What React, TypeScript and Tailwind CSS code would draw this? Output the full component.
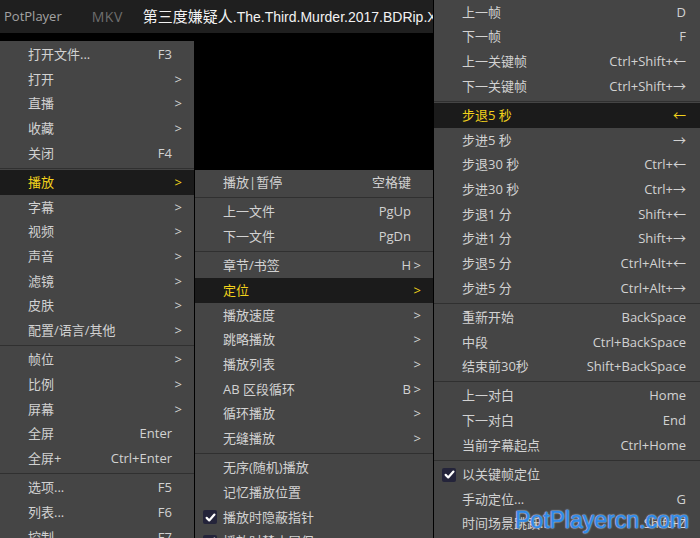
import React from 'react';

type Item = {
  label?: string;
  keys?: string;
  sub?: boolean;
  active?: boolean;
  checked?: boolean;
  sep?: boolean;
};

const mainMenu: Item[] = [
  { label: '打开文件...', keys: 'F3' },
  { label: '打开', sub: true },
  { label: '直播', sub: true },
  { label: '收藏', sub: true },
  { label: '关闭', keys: 'F4' },
  { sep: true },
  { label: '播放', sub: true, active: true },
  { label: '字幕', sub: true },
  { label: '视频', sub: true },
  { label: '声音', sub: true },
  { label: '滤镜', sub: true },
  { label: '皮肤', sub: true },
  { label: '配置/语言/其他', sub: true },
  { sep: true },
  { label: '帧位', sub: true },
  { label: '比例', sub: true },
  { label: '屏幕', sub: true },
  { label: '全屏', keys: 'Enter' },
  { label: '全屏+', keys: 'Ctrl+Enter' },
  { sep: true },
  { label: '选项...', keys: 'F5' },
  { label: '列表...', keys: 'F6' },
  { label: '控制', keys: 'F7' },
];

const playMenu: Item[] = [
  { label: '播放|暂停', keys: '空格键' },
  { sep: true },
  { label: '上一文件', keys: 'PgUp' },
  { label: '下一文件', keys: 'PgDn' },
  { sep: true },
  { label: '章节/书签', keys: 'H', sub: true },
  { label: '定位', sub: true, active: true },
  { label: '播放速度', sub: true },
  { label: '跳略播放', sub: true },
  { label: '播放列表', sub: true },
  { label: 'AB 区段循环', keys: 'B', sub: true },
  { label: '循环播放', sub: true },
  { label: '无缝播放', sub: true },
  { sep: true },
  { label: '无序(随机)播放' },
  { label: '记忆播放位置' },
  { label: '播放时隐蔽指针', checked: true },
  { label: '播放时禁止屏保', checked: true },
];

const seekMenu: Item[] = [
  { label: '上一帧', keys: 'D' },
  { label: '下一帧', keys: 'F' },
  { label: '上一关键帧', keys: 'Ctrl+Shift+←' },
  { label: '下一关键帧', keys: 'Ctrl+Shift+→' },
  { sep: true },
  { label: '步退5 秒', keys: '←', active: true },
  { label: '步进5 秒', keys: '→' },
  { label: '步退30 秒', keys: 'Ctrl+←' },
  { label: '步进30 秒', keys: 'Ctrl+→' },
  { label: '步退1 分', keys: 'Shift+←' },
  { label: '步进1 分', keys: 'Shift+→' },
  { label: '步退5 分', keys: 'Ctrl+Alt+←' },
  { label: '步进5 分', keys: 'Ctrl+Alt+→' },
  { sep: true },
  { label: '重新开始', keys: 'BackSpace' },
  { label: '中段', keys: 'Ctrl+BackSpace' },
  { label: '结束前30秒', keys: 'Shift+BackSpace' },
  { sep: true },
  { label: '上一对白', keys: 'Home' },
  { label: '下一对白', keys: 'End' },
  { label: '当前字幕起点', keys: 'Ctrl+Home' },
  { sep: true },
  { label: '以关键帧定位', checked: true },
  { label: '手动定位...', keys: 'G' },
  { label: '时间场景跳跃...', keys: 'Shift+Z' },
];

const CheckBox = () => (
  <span className="absolute left-[8px] top-1/2 -translate-y-1/2 w-[14px] h-[14px] rounded-[2px] bg-[#24243a] flex items-center justify-center">
    <svg width="11" height="11" viewBox="0 0 12 12">
      <path d="M1.8 6.4 L4.6 9.2 L10.3 2.8" fill="none" stroke="#ffffff" strokeWidth="2.4" strokeLinecap="round" strokeLinejoin="round" />
    </svg>
  </span>
);

const Menu = ({ items, arrows = true, className = '' }: { items: Item[]; arrows?: boolean; className?: string }) => (
  <div className={`bg-[#454545] text-[13px] text-[#d2d2d2] ${className}`}>
    {items.map((it, i) =>
      it.sep ? (
        <div key={i} className="h-[4.5px] flex items-center">
          <div className="w-full h-px bg-[#303030]" />
        </div>
      ) : (
        <div
          key={i}
          className={`relative h-[24.7px] shrink-0 flex items-center pl-[28px] ${arrows ? 'pr-[12px]' : 'pr-[14px]'} ${
            it.active ? 'bg-[#1b1b1b] text-[#f2d21b]' : ''
          }`}
        >
          {it.checked && <CheckBox />}
          <span className="flex-1 whitespace-nowrap">{it.label}</span>
          {it.keys && <span className="whitespace-nowrap">{it.keys}</span>}
          {arrows && <span className="w-[10px] text-right">{it.sub ? '>' : ''}</span>}
        </div>
      )
    )}
  </div>
);

export default function App() {
  return (
    <div
      className="relative w-[700px] h-[538px] overflow-hidden bg-black flex gap-px"
      style={{ fontFamily: '"Open Sans", "Noto Sans CJK SC", sans-serif' }}
    >
      <div className="w-[433px] shrink-0 flex flex-col">
        <div className="h-[33px] shrink-0 bg-[#1f1f1f] flex items-center whitespace-nowrap overflow-hidden">
          <span className="pl-[4px] text-[13px] text-[#a3a3a3]">PotPlayer</span>
          <svg className="ml-[10px]" width="9" height="6" viewBox="0 0 9 6">
            <path d="M0.5 0.8 L4.5 4.8 L8.5 0.8" fill="none" stroke="#7a7a7a" strokeWidth="1" />
          </svg>
          <div className="ml-[10px] w-px h-[33px] bg-[#121212]" />
          <span className="ml-[10px] text-[14px] text-[#6e6e6e] tracking-[0.5px]">MKV</span>
          <div className="ml-[11px] w-px h-[16px] bg-[#3a3a3a]" />
          <span className="ml-[9px] text-[15px] text-[#f2f2f2]">
            第三度嫌疑人
            <span
              className="text-[14px]"
              style={{ fontFamily: '"Liberation Sans", sans-serif' }}
            >
              .The.Third.Murder.2017.BDRip.X264
            </span>
          </span>
        </div>
        <div className="flex gap-px mt-[8px] shrink-0">
          <Menu items={mainMenu} className="w-[194px] shrink-0 pt-[1.5px]" />
          <Menu items={playMenu} className="flex-1 mt-[129px] pt-[0.5px]" />
        </div>
      </div>
      <Menu items={seekMenu} arrows={false} className="flex-1" />
      <div
        className="absolute left-[515px] top-[509px] text-[23px] text-[#2f88e6] leading-none"
        style={{
          fontFamily: '"Liberation Sans", Arial, sans-serif',
          WebkitTextStroke: '0.6px #2f88e6',
          textShadow: '0 0 2px #ffffff, 0 0 1px #ffffff',
        }}
      >
        PotPlayercn.com
      </div>
    </div>
  );
}
